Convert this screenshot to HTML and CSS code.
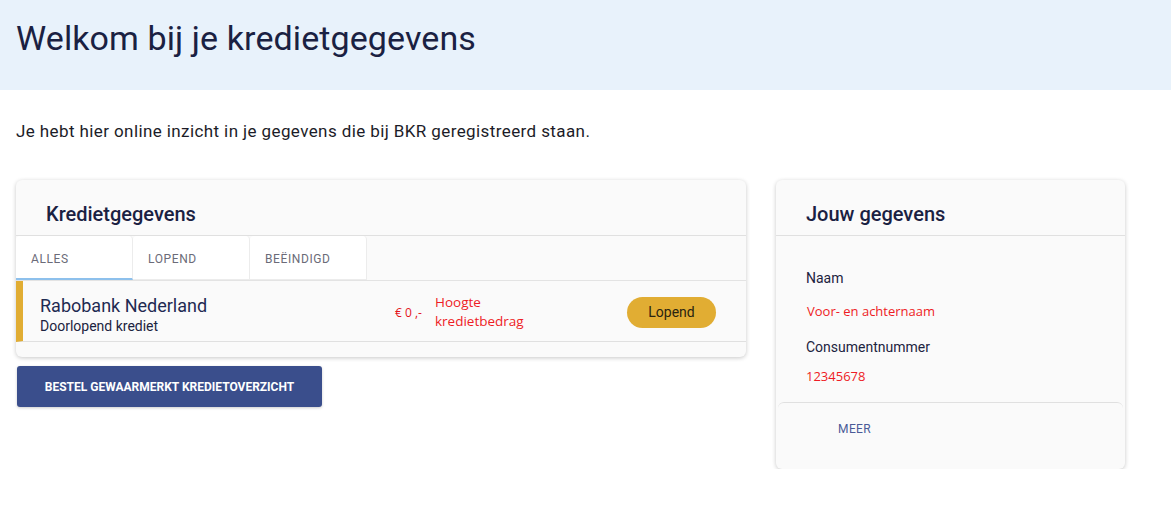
FILE: index.html
```html
<!DOCTYPE html>
<html lang="nl">
<head>
<meta charset="utf-8">
<title>Kredietgegevens</title>
<link rel="stylesheet" href="styles.css">
</head>
<body>
<header class="hero">
  <h1 class="hero-title">Welkom bij je kredietgegevens</h1>
</header>
<main class="main">
  <p class="intro">Je hebt hier online inzicht in je gegevens die bij BKR geregistreerd staan.</p>
  <div class="columns">
    <div class="left">
      <section class="card credit-card">
        <h2 class="card-title">Kredietgegevens</h2>
        <nav class="tabs">
          <span class="tab active">Alles</span>
          <span class="tab">Lopend</span>
          <span class="tab">Beëindigd</span>
        </nav>
        <div class="credit-row">
          <div class="credit-name">
            <div class="bank">Rabobank Nederland</div>
            <div class="kind">Doorlopend krediet</div>
          </div>
          <div class="amount">€ 0 ,-</div>
          <div class="amount-label">Hoogte<br>kredietbedrag</div>
          <span class="status">Lopend</span>
        </div>
      </section>
      <button class="order-btn">Bestel gewaarmerkt kredietoverzicht</button>
    </div>
    <aside class="card info-card">
      <h2 class="card-title">Jouw gegevens</h2>
      <div class="info-body">
        <div class="info-label">Naam</div>
        <div class="info-value name-value">Voor- en achternaam</div>
        <div class="info-label">Consumentnummer</div>
        <div class="info-value num-value">12345678</div>
      </div>
      <div class="info-footer">
        <span class="more">Meer</span>
      </div>
    </aside>
  </div>
</main>
</body>
</html>
```

FILE: styles.css
```css
* { box-sizing: border-box; }
body {
  margin: 0;
  font-family: Roboto, "Liberation Sans", sans-serif;
  color: #1c2340;
  background: #fff;
}
.hero {
  background: #e8f2fb;
  height: 90px;
  padding: 0 16px;
  display: flex;
  align-items: center;
}
.hero-title {
  margin: 0 0 14px;
  font-size: 34px;
  font-weight: 400;
  color: #1a2142;
  letter-spacing: 0.1px;
}
.main { padding: 0 16px; }
.intro {
  margin: 30px 0 0;
  font-size: 17px;
  line-height: 22px;
  letter-spacing: 0.4px;
  color: #1c1c28;
}
.columns {
  display: flex;
  gap: 30px;
  margin-top: 38px;
  align-items: flex-start;
}
.left { width: 730px; }
.card {
  background: #fafafa;
  border-radius: 6px;
  box-shadow: 0 1px 4px rgba(0,0,0,0.22);
}
.card-title {
  margin: 0;
  height: 56px;
  padding: 12px 30px 0;
  display: flex;
  align-items: center;
  font-size: 20px;
  font-weight: 500;
  color: #1a2142;
  border-bottom: 1px solid #e0e0e0;
}
.credit-card { padding-bottom: 15px; }
.tabs {
  display: flex;
  height: 45px;
  border-bottom: 1px solid #e3e3e3;
}
.tab {
  width: 117px;
  background: #fff;
  border: 1px solid #ececec;
  border-top: none;
  border-left: none;
  border-radius: 4px 4px 0 0;
  display: flex;
  align-items: center;
  padding: 3px 0 0 15px;
  font-size: 12px;
  text-transform: uppercase;
  letter-spacing: 0.6px;
  color: #6b6b78;
}
.tab.active { border-bottom: 2px solid #8dc0ec; }
.credit-row {
  display: flex;
  align-items: center;
  height: 61px;
  border-left: 7px solid #e1ad33;
  border-bottom: 1px solid #e0e0e0;
  padding-left: 17px;
}
.credit-name { width: 355px; padding-top: 7px; }
.bank { font-size: 18px; line-height: 22px; color: #1f2a52; }
.kind { font-size: 14px; line-height: 18px; color: #1c2340; }
.amount {
  font-family: "Open Sans", sans-serif;
  font-size: 12px;
  color: #e4141b;
  width: 40px;
  margin-top: 2px;
}
.amount-label {
  font-family: "Open Sans", sans-serif;
  font-size: 13.5px;
  line-height: 19px;
  color: #ee1c25;
  width: 192px;
  margin-top: 1px;
}
.status {
  background: #e1ad33;
  color: #2a2410;
  font-size: 14px;
  width: 89px;
  height: 31px;
  border-radius: 16px;
  display: flex;
  align-items: center;
  justify-content: center;
  margin-top: 2px;
}
.order-btn {
  margin: 9px 0 0 1px;
  width: 305px;
  height: 41px;
  border: none;
  border-radius: 3px;
  background: #3a4e8c;
  color: #fff;
  font-family: Roboto, "Liberation Sans", sans-serif;
  font-size: 12px;
  font-weight: 700;
  text-transform: uppercase;
  box-shadow: 0 1px 3px rgba(0,0,0,0.2);
}
.info-card { width: 349px; height: 289px; display: flex; flex-direction: column; }
.info-body { padding: 33px 30px 0; flex: none; height: 166px; }
.info-label { font-size: 14px; line-height: 18px; color: #1c2340; }
.info-value {
  font-family: "Open Sans", sans-serif;
  font-size: 13px;
  color: #ee1c25;
  line-height: 18px;
}
.name-value { margin: 15px 0 18px 1px; }
.num-value { margin-top: 11px; }
.info-footer {
  margin: 0 2px;
  border-top: 1px solid #e0e0e0;
  border-radius: 6px 6px 0 0;
  padding: 15px 0 0 60px;
  flex: 1;
}
.more {
  font-size: 12px;
  letter-spacing: 0.4px;
  text-transform: uppercase;
  color: #4a5a98;
}
```
